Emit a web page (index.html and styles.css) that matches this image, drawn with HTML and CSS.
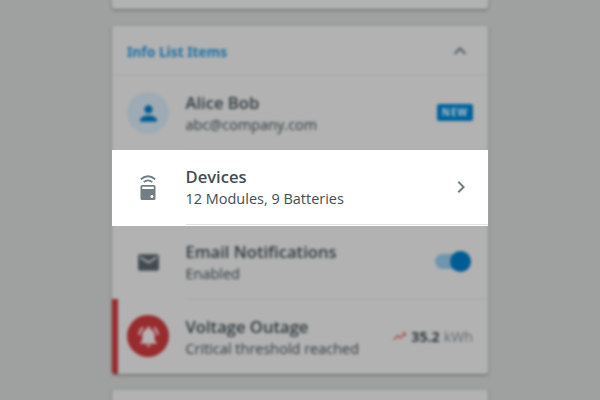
FILE: index.html
```
<!DOCTYPE html>
<html lang="en">
<head>
<meta charset="utf-8">
<title>Info List Items</title>
<link rel="stylesheet" href="styles.css">
</head>
<body>
<main class="stage">
  <div class="scene">
    <section class="card card-prev"></section>
    <section class="card">
      <header class="card-header">
        <h2>Info List Items</h2>
        <svg class="chevron" viewBox="0 0 24 24"><path d="M12 8l-6 6 1.41 1.41L12 10.83l4.59 4.58L18 14z"/></svg>
      </header>
      <div class="row">
        <div class="avatar avatar-user"><svg viewBox="0 0 24 24"><path d="M12 12c2.21 0 4-1.79 4-4s-1.79-4-4-4-4 1.79-4 4 1.79 4 4 4zm0 2c-2.67 0-8 1.34-8 4v2h16v-2c0-2.660-5.33-4-8-4z"/></svg></div>
        <div class="content">
          <div class="text"><div class="title">Alice Bob</div><div class="subtitle">abc@company.com</div></div>
          <span class="tag">NEW</span>
        </div>
      </div>
      <div class="row row-slot"></div>
      <div class="row">
        <div class="avatar avatar-mail"><svg viewBox="0 0 24 24"><path d="M20 4H4c-1.1 0-1.99.9-1.99 2L2 18c0 1.100.9 2 2 2h16c1.100 0 2-.9 2-2V6c0-1.100-.9-2-2-2zm0 4l-8 5-8-5V6l8 5 8-5v2z"/></svg></div>
        <div class="content">
          <div class="text"><div class="title">Email Notifications</div><div class="subtitle">Enabled</div></div>
          <span class="switch"><span class="thumb"></span></span>
        </div>
      </div>
      <div class="row row-alert">
        <div class="avatar avatar-alarm"><svg viewBox="0 0 24 24"><path d="M7.580 4.080L6.150 2.650C3.750 4.480 2.170 7.300 2.030 10.500h2c.15-2.650 1.510-4.970 3.550-6.420zm12.390 6.420h2c-.15-3.200-1.730-6.020-4.120-7.850l-1.420 1.430c2.020 1.450 3.390 3.770 3.540 6.420zM18 11c0-3.070-1.640-5.640-4.500-6.320V4c0-.83-.67-1.500-1.500-1.500s-1.500.67-1.500 1.500v.68C7.630 5.360 6 7.920 6 11v5l-2 2v1h16v-1l-2-2v-5zm-6 11c1.100 0 2-.9 2-2h-4c0 1.100.9 2 2 2z"/></svg></div>
        <div class="content">
          <div class="text"><div class="title">Voltage Outage</div><div class="subtitle">Critical threshold reached</div></div>
          <div class="reading">
            <svg viewBox="0 0 24 24"><path d="M16 6l2.290 2.290-4.880 4.880-4-4L2 16.590 3.410 18l6-6 4 4 6.300-6.290L22 12V6z"/></svg>
            <span class="value">35.2</span><span class="unit">kWh</span>
          </div>
        </div>
      </div>
    </section>
    <section class="card card-next"></section>
  </div>
  <div class="row spotlight">
    <div class="avatar avatar-device">
      <svg viewBox="0 0 18 27">
        <path class="wave" d="M1.800 5.200Q9-.8 16.200 5.200M4.700 8.100Q9 4.600 13.300 8.100"/>
        <path fill-rule="evenodd" d="M3 11h12q1.500 0 1.500 1.500v12q0 1.500-1.500 1.500H3q-1.500 0-1.500-1.500v-12Q1.500 11 3 11zM3.200 12.700v2.300h11.600v-2.300zM12.900 20.900a1.600 1.600 0 1 0 .01 0z"/>
      </svg>
    </div>
    <div class="content">
      <div class="text"><div class="title">Devices</div><div class="subtitle">12 Modules, 9 Batteries</div></div>
      <svg class="chevron" viewBox="0 0 24 24"><path d="M10 6L8.590 7.410 13.170 12l-4.580 4.590L10 18l6-6z"/></svg>
    </div>
  </div>
</main>
</body>
</html>
```

FILE: styles.css
```
* { box-sizing: border-box; }
body {
  margin: 0;
  height: 400px;
  background: #9ea19f;
  color: #424e54;
  font-family: "Open Sans", "Noto Sans", sans-serif;
}
svg { display: block; fill: currentColor; }
.stage {
  position: relative;
  display: flow-root;
  height: 400px;
  padding: 0 112px;
  overflow: hidden;
}
.scene {
  display: flex;
  flex-direction: column;
  gap: 17px;
  margin-top: -31px;
  filter: blur(1.4px);
  color: #2e383d;
}
.card {
  flex: none;
  background: #b2b2b2;
  border-radius: 3px;
  box-shadow: 0 1px 2px rgba(0, 0, 0, .32), 0 1px 4px rgba(0, 0, 0, .12);
}
.card-prev { height: 40px; }
.card-next { height: 60px; margin-top: -1px; }
.card-header {
  display: flex;
  align-items: center;
  justify-content: space-between;
  height: 50px;
  padding: 0 16px 0 15px;
  border-bottom: 1px solid #a6a6a6;
}
.card-header h2 {
  margin: 0;
  padding-top: 2px;
  color: #1b6fa3;
  font-family: "Noto Sans", "Open Sans", sans-serif;
  font-size: 13.800px;
  font-weight: 700;
}
.chevron { width: 24px; height: 24px; color: #727e84; }
.card-header .chevron { color: #4c555a; }
.row {
  display: flex;
  align-items: stretch;
  height: 74.500px;
  padding-left: 15px;
}
.avatar {
  display: grid;
  place-items: center;
  flex: none;
  align-self: center;
  width: 42px;
  height: 42px;
  margin-right: 16.500px;
  border-radius: 50%;
}
.avatar svg { width: 25px; height: 25px; }
.avatar-user { background: #9eabb4; color: #005c92; }
.avatar-mail { color: #414c52; }
.avatar-alarm { background: #982b2e; color: #b9b2b2; }
.avatar-device { color: #727e84; }
.avatar-device svg { width: 18px; height: 27px; }
.wave { fill: none; stroke: currentColor; stroke-width: 1.800; }
.content {
  display: flex;
  align-items: center;
  justify-content: space-between;
  flex: 1;
  padding-right: 15px;
  border-bottom: 1px solid #a6a6a6;
}
.text { padding-top: 2px; }
.title { font-size: 16.600px; line-height: 22px; font-weight: 600; }
.subtitle { font-size: 14.480px; line-height: 21px; }
.tag {
  width: 36px;
  height: 17px;
  border-radius: 2px;
  background: #00629b;
  color: #b2c3ce;
  font-size: 10px;
  font-weight: 700;
  line-height: 17px;
  letter-spacing: 1px;
  text-align: center;
}
.switch {
  display: flex;
  align-items: center;
  justify-content: flex-end;
  width: 36px;
  height: 15px;
  margin-right: 2px;
  border-radius: 8px;
  background: #6f96ae;
}
.thumb { flex: none; width: 21px; height: 21px; border-radius: 50%; background: #005c92; }
.row-alert {
  height: 75px;
  margin-top: -1px;
  border-left: 6px solid #982b2e;
  padding-left: 9px;
  border-radius: 0 0 0 3px;
}
.row-alert .content { border-bottom: 0; }
.row-alert .reading { padding-top: 1px; }
.reading { display: flex; align-items: center; font-size: 14.200px; }
.reading svg { width: 15px; height: 15px; margin-right: 4px; color: #a83b3e; }
.value { font-weight: 700; margin-right: 4px; }
.unit { color: #626a6f; }
.spotlight {
  position: absolute;
  top: 150px;
  left: 112px;
  width: 376px;
  height: 76px;
  padding-bottom: 1px;
  background: #fff;
}
.spotlight .avatar { margin-top: -1px; }
.spotlight .text { padding-top: 1px; }
.spotlight .content { border-bottom-color: #dfe1e2; }
```
